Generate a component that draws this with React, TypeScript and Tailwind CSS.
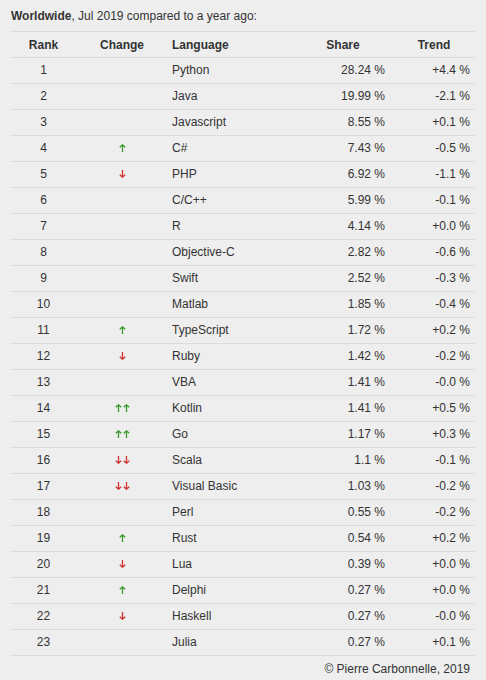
const rows: [number, number, string, string, string][] = [
  [1, 0, "Python", "28.24 %", "+4.4 %"],
  [2, 0, "Java", "19.99 %", "-2.1 %"],
  [3, 0, "Javascript", "8.55 %", "+0.1 %"],
  [4, 1, "C#", "7.43 %", "-0.5 %"],
  [5, -1, "PHP", "6.92 %", "-1.1 %"],
  [6, 0, "C/C++", "5.99 %", "-0.1 %"],
  [7, 0, "R", "4.14 %", "+0.0 %"],
  [8, 0, "Objective-C", "2.82 %", "-0.6 %"],
  [9, 0, "Swift", "2.52 %", "-0.3 %"],
  [10, 0, "Matlab", "1.85 %", "-0.4 %"],
  [11, 1, "TypeScript", "1.72 %", "+0.2 %"],
  [12, -1, "Ruby", "1.42 %", "-0.2 %"],
  [13, 0, "VBA", "1.41 %", "-0.0 %"],
  [14, 2, "Kotlin", "1.41 %", "+0.5 %"],
  [15, 2, "Go", "1.17 %", "+0.3 %"],
  [16, -2, "Scala", "1.1 %", "-0.1 %"],
  [17, -2, "Visual Basic", "1.03 %", "-0.2 %"],
  [18, 0, "Perl", "0.55 %", "-0.2 %"],
  [19, 1, "Rust", "0.54 %", "+0.2 %"],
  [20, -1, "Lua", "0.39 %", "+0.0 %"],
  [21, 1, "Delphi", "0.27 %", "+0.0 %"],
  [22, -1, "Haskell", "0.27 %", "-0.0 %"],
  [23, 0, "Julia", "0.27 %", "+0.1 %"],
];

function Arrow({ up }: { up: boolean }) {
  const color = up ? "#3c9a2e" : "#d0332f";
  return (
    <svg width="7" height="8" viewBox="0 0 7 8" className="block">
      {up ? (
        <path d="M3.5 0.5 L3.5 8 M0.8 3.3 L3.5 0.8 L6.2 3.3" stroke={color} strokeWidth="1.3" fill="none" />
      ) : (
        <path d="M3.5 0 L3.5 7.5 M0.8 4.7 L3.5 7.2 L6.2 4.7" stroke={color} strokeWidth="1.3" fill="none" />
      )}
    </svg>
  );
}

function Change({ v }: { v: number }) {
  if (v === 0) return null;
  const n = Math.abs(v);
  return (
    <div className="flex gap-[1px]">
      {Array.from({ length: n }).map((_, i) => (
        <Arrow key={i} up={v > 0} />
      ))}
    </div>
  );
}

const grid = "grid grid-cols-[66px_92px_125px_100px_82px] h-[26px] items-center border-b border-[#dcdcdc]";

export default function App() {
  return (
    <div
      className="min-h-[680px] bg-[#eeeeee] text-[#333333] text-[12px] pt-[7px] pl-[10px]"
      style={{ fontFamily: '"Liberation Sans", Arial, Helvetica, sans-serif' }}
    >
      <div className="h-[18px] leading-[18px] pl-[1px]">
        <b>Worldwide</b>, Jul 2019 compared to a year ago:
      </div>
      <div className="w-[465px] mt-[6px] border-t border-[#dcdcdc]">
        <div className={`${grid} font-bold`}>
          <div className="text-center pl-[1px]">Rank</div>
          <div className="text-center">Change</div>
          <div className="pl-[4px]">Language</div>
          <div className="text-center">Share</div>
          <div className="text-center">Trend</div>
        </div>
        {rows.map(([rank, ch, lang, share, trend]) => (
          <div key={rank} className={`${grid} pb-[2px]`}>
            <div className="text-center pl-[1px]">{rank}</div>
            <div className="flex justify-center">
              <Change v={ch} />
            </div>
            <div className="pl-[4px]">{lang}</div>
            <div className="text-right pr-[8px]">{share}</div>
            <div className="text-right pr-[5px]">{trend}</div>
          </div>
        ))}
        <div className="text-right pr-[5px] pt-[4px] leading-[18px]">© Pierre Carbonnelle, 2019</div>
      </div>
    </div>
  );
}
